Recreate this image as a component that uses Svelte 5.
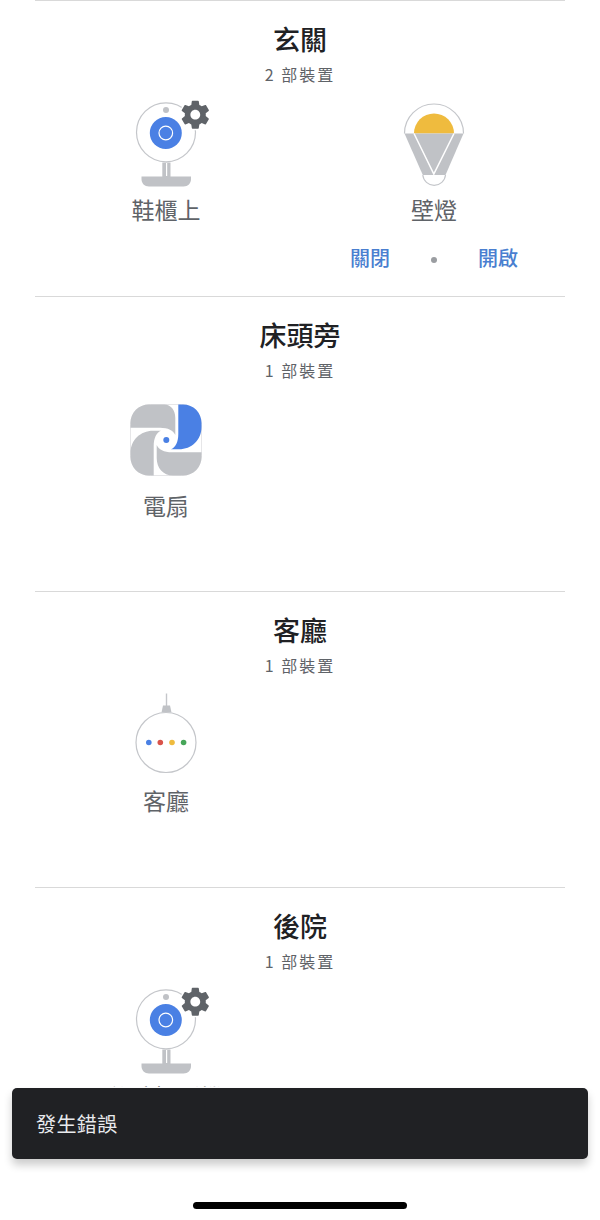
<script>
  const gear = "M19.43 12.98c.04-.32.07-.64.07-.98s-.03-.66-.07-.98l2.11-1.65c.19-.15.24-.42.12-.64l-2-3.46c-.12-.22-.39-.3-.61-.22l-2.49 1c-.52-.4-1.08-.73-1.69-.98l-.38-2.65C14.46 2.18 14.25 2 14 2h-4c-.25 0-.46.18-.49.42l-.38 2.65c-.61.25-1.17.59-1.69.98l-2.49-1c-.23-.09-.49 0-.61.22l-2 3.46c-.13.22-.07.49.12.64l2.11 1.65c-.04.32-.07.65-.07.98s.03.66.07.98l-2.11 1.65c-.19.15-.24.42-.12.64l2 3.46c.12.22.39.3.61.22l2.49-1c.52.4 1.08.73 1.69.98l.38 2.65c.03.24.24.42.49.42h4c.25 0 .46-.18.49-.42l.38-2.65c.61-.25 1.17-.59 1.69-.98l2.49 1c.23.09.49 0 .61-.22l2-3.46c.12-.22.07-.49-.12-.64l-2.11-1.65zM12 15.5c-1.93 0-3.5-1.57-3.5-3.5s1.57-3.5 3.5-3.5 3.5 1.57 3.5 3.5-1.57 3.5-3.5 3.5z";
  const roundBlade = "M178.300 404.500H183C193.500 404.500 201.500 412.500 201.500 423V427C201.500 440 191.500 449.300 179 449.300H171C175.500 447.500 178.300 442 178.300 434Z";
  const tightBlade = "M178.300 404.500H183C193.500 404.500 201.500 412.500 201.500 423V438C201.500 445 196 449.300 188 449.300H171C175.500 447.500 178.300 442 178.300 434Z";
  const mediumBlade = "M178.300 404.500H183C193.500 404.500 201.500 412.500 201.500 423V433C201.500 443 194 449.300 184 449.300H171C175.500 447.500 178.300 442 178.300 434Z";
  const rooms = [
    { name: "玄關", count: "2 部裝置", actions: true, devices: [{ label: "鞋櫃上", kind: "camera" }, { label: "壁燈", kind: "bulb" }] },
    { name: "床頭旁", count: "1 部裝置", devices: [{ label: "電扇", kind: "fan" }] },
    { name: "客廳", count: "1 部裝置", devices: [{ label: "客廳", kind: "speaker" }] },
    { name: "後院", count: "1 部裝置", devices: [{ label: "後院攝影機", kind: "camera" }] }
  ];
</script>

{#snippet icon(kind)}
  {#if kind === "camera"}
    <svg class="icon" viewBox="121 95 90 95" width="90" height="95">
      <circle cx="166" cy="132.300" r="29.500" fill="#fff" stroke="#c4c6ca" stroke-width="1.200" />
      <circle cx="166" cy="110" r="3" fill="#c0c2c6" />
      <circle cx="165.800" cy="133" r="16" fill="#4a80e4" />
      <circle cx="165.800" cy="133" r="6.800" fill="none" stroke="#fff" stroke-width="1.200" />
      <path d="M162.300 162.500h8.200v15h-8.200z" fill="#c0c2c6" />
      <path d="M166.600 163v13" stroke="#fff" stroke-width="1.200" />
      <path d="M141.500 176.500H191V179C191 183.500 188 186.500 183.500 186.500H149C144.500 186.500 141.500 183.500 141.500 179Z" fill="#c0c2c6" />
      <circle cx="195.300" cy="114.700" r="15.500" fill="#fff" />
      <g transform="translate(178.500 97.900) scale(1.400)"><path d={gear} fill="#5f6368" /></g>
    </svg>
  {:else if kind === "bulb"}
    <svg class="icon" viewBox="389 95 90 95" width="90" height="95">
      <path d="M404.500 133.500A29.500 29.500 0 0 1 463.500 133.500" fill="#fff" stroke="#c4c6ca" stroke-width="1.200" />
      <path d="M414 133.500A20 20 0 0 1 454 133.500Z" fill="#efbb3e" />
      <path d="M404.500 133.500H463.500L445.500 175H422.800Z" fill="#c0c2c6" />
      <path d="M414 133.500L433.800 174L454 133.500" fill="none" stroke="#fff" stroke-width="1.500" />
      <path d="M422.800 175A11.400 11.400 0 0 0 445.500 175" fill="#fff" stroke="#c4c6ca" stroke-width="1.200" />
    </svg>
  {:else if kind === "fan"}
    <svg class="icon" viewBox="121 391 90 95" width="90" height="95">
      <rect x="130.500" y="404.500" width="71" height="71" rx="20" fill="#fff" stroke="#dfe0e2" stroke-width="0.800" />
      <path d={roundBlade} fill="#4a80e4" />
      <path d={tightBlade} fill="#c0c2c6" transform="rotate(-90 166 440)" />
      <path d={roundBlade} fill="#c0c2c6" transform="rotate(180 166 440)" />
      <path d={mediumBlade} fill="#c0c2c6" transform="rotate(90 166 440)" />
      <circle cx="166.300" cy="440" r="7.500" fill="#fff" />
      <circle cx="166.300" cy="440" r="3" fill="#4a80e4" />
    </svg>
  {:else}
    <svg class="icon" viewBox="121 686.500 90 95" width="90" height="95">
      <path d="M166.500 694V708" stroke="#c4c6ca" stroke-width="1.400" />
      <path d="M163 706H170L171.500 713H161.500Z" fill="#c0c2c6" />
      <circle cx="166" cy="743" r="30" fill="#fff" stroke="#c4c6ca" stroke-width="1.200" />
      <circle cx="148.800" cy="743" r="2.800" fill="#4a80e4" />
      <circle cx="160.300" cy="743" r="2.800" fill="#d9534a" />
      <circle cx="172" cy="743" r="2.800" fill="#efbb3e" />
      <circle cx="183.600" cy="743" r="2.800" fill="#47a659" />
    </svg>
  {/if}
{/snippet}

<main class="page">
  {#each rooms as room}
    <section class="room">
      <h2>{room.name}</h2>
      <p class="count">{room.count}</p>
      <div class="devices">
        {#each room.devices as d}
          <div class="device">
            {@render icon(d.kind)}
            <span class="label">{d.label}</span>
          </div>
        {/each}
        {#if room.actions}
          <div class="actions">
            <button>關閉</button>
            <i class="dot"></i>
            <button>開啟</button>
          </div>
        {/if}
      </div>
    </section>
  {/each}

  <footer class="footer">
    <div class="toast">發生錯誤</div>
    <div class="home"></div>
  </footer>
</main>

<style>
  :global(body) {
    margin: 0;
    background: #fff;
  }
  .page {
    position: relative;
    width: 600px;
    height: 1220px;
    overflow: hidden;
    background: #fff;
    font-family: "Noto Sans CJK TC", "Liberation Sans", sans-serif;
  }
  .room {
    box-sizing: border-box;
    height: 295.5px;
    margin: 0 35px;
    border-top: 1px solid #d9d9d9;
    padding-top: 21px;
    text-align: center;
  }
  h2 {
    margin: 0;
    font-size: 27px;
    line-height: 34px;
    font-weight: 500;
    color: #202124;
  }
  .count {
    margin: 7px 0 10px;
    font-size: 16px;
    line-height: 22px;
    letter-spacing: 2px;
    color: #5f6368;
  }
  .devices {
    display: grid;
    grid-template-columns: 262px 262px;
    column-gap: 6px;
  }
  .device {
    display: flex;
    flex-direction: column;
    align-items: center;
  }
  .icon {
    display: block;
  }
  .label {
    margin-top: 2px;
    font-size: 23px;
    line-height: 34px;
    white-space: nowrap;
    color: #5f6368;
  }
  .actions {
    grid-column: 2;
    display: flex;
    align-items: center;
    justify-content: center;
    gap: 41px;
    margin-top: 18px;
  }
  .actions button {
    padding: 0;
    border: 0;
    background: none;
    font: 500 20px/28px "Noto Sans CJK TC", "Liberation Sans", sans-serif;
    color: #4a7fd0;
  }
  .dot {
    width: 6px;
    height: 6px;
    margin-top: 4px;
    border-radius: 50%;
    background: #9a9da1;
  }
  .footer {
    position: absolute;
    left: 0;
    right: 0;
    bottom: 0;
    height: 133px;
    box-sizing: border-box;
    padding-top: 1px;
    display: flex;
    flex-direction: column;
    background: #fff;
  }
  .toast {
    box-sizing: border-box;
    height: 71px;
    margin: 0 12px;
    padding-left: 24px;
    display: flex;
    align-items: center;
    border-radius: 5px;
    background: #202124;
    color: #e8eaed;
    font-size: 20px;
    letter-spacing: 0.4px;
    box-shadow: 0 6px 8px rgba(0, 0, 0, 0.2);
  }
  .home {
    width: 214px;
    height: 7px;
    margin: 43px auto 0;
    border-radius: 4px;
    background: #000;
  }
</style>
